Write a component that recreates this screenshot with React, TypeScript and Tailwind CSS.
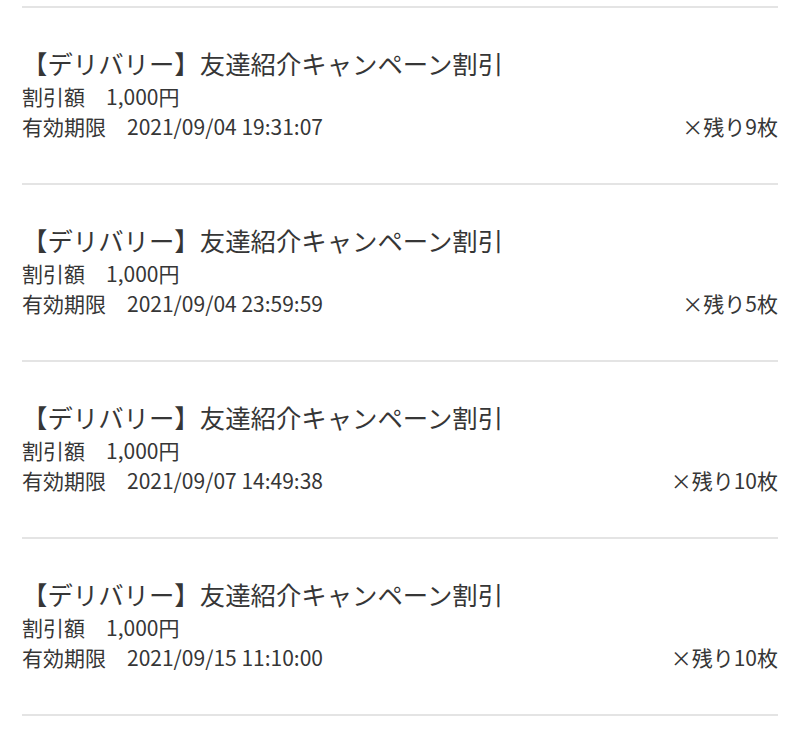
const coupons = [
  { expires: '2021/09/04 19:31:07', left: 9 },
  { expires: '2021/09/04 23:59:59', left: 5 },
  { expires: '2021/09/07 14:49:38', left: 10 },
  { expires: '2021/09/15 11:10:00', left: 10 },
];

export default function App() {
  return (
    <div
      className="min-h-[752px] bg-white pt-[6px] text-[#363636]"
      style={{ fontFamily: '"Noto Sans CJK JP", "Noto Sans", sans-serif' }}
    >
      <ul className="mx-[22px] border-t-2 border-[#e4e4e4]">
        {coupons.map((c, i) => (
          <li key={i} className="border-b-2 border-[#e4e4e4] pt-[37px] pb-[42px]">
            <div className="text-[25.4px] leading-[36px]">【デリバリー】友達紹介キャンペーン割引</div>
            <div className="text-[21px] leading-[30px]">割引額　1,000円</div>
            <div className="flex justify-between text-[21px] leading-[30px]">
              <span>有効期限　{c.expires}</span>
              <span>×残り{c.left}枚</span>
            </div>
          </li>
        ))}
      </ul>
    </div>
  );
}
